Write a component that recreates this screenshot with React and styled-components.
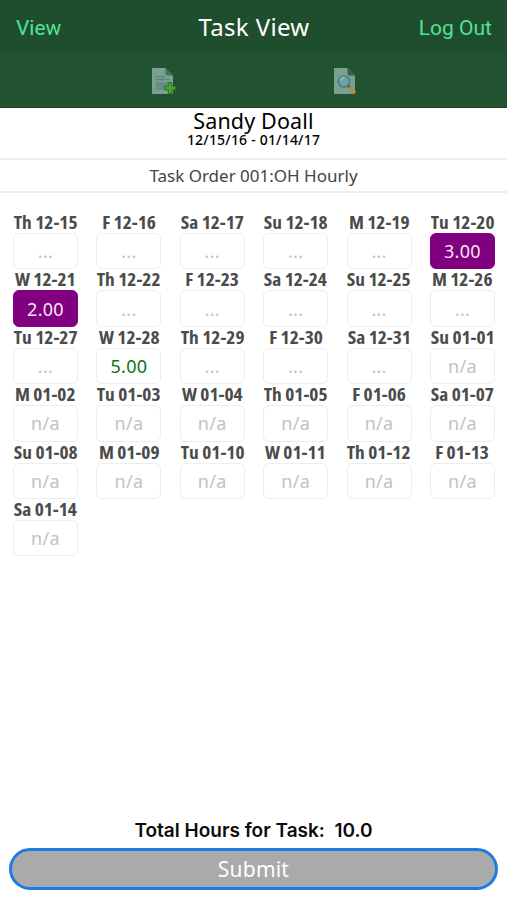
import React from 'react'
import styled, { createGlobalStyle } from 'styled-components';

const days = [
    ['Th 12-15'], ['F 12-16'], ['Sa 12-17'], ['Su 12-18'], ['M 12-19'], ['Tu 12-20', '3.00', 'saved'],
    ['W 12-21', '2.00', 'saved'], ['Th 12-22'], ['F 12-23'], ['Sa 12-24'], ['Su 12-25'], ['M 12-26'],
    ['Tu 12-27'], ['W 12-28', '5.00', 'edited'], ['Th 12-29'], ['F 12-30'], ['Sa 12-31'], ['Su 01-01', 'n/a'],
    ['M 01-02', 'n/a'], ['Tu 01-03', 'n/a'], ['W 01-04', 'n/a'], ['Th 01-05', 'n/a'], ['F 01-06', 'n/a'], ['Sa 01-07', 'n/a'],
    ['Su 01-08', 'n/a'], ['M 01-09', 'n/a'], ['Tu 01-10', 'n/a'], ['W 01-11', 'n/a'], ['Th 01-12', 'n/a'], ['F 01-13', 'n/a'],
    ['Sa 01-14', 'n/a'],
];

function AddPageIcon() {
    return (
        <svg width="26" height="28" viewBox="0 0 26 28">
            <path d="M1 1h13.500l7.500 7.500V27H1z" fill="#7b9f91" />
            <path d="M14.500 1l7.500 7.500h-5q-2.500 0-2.500-2.500z" fill="#416f5b" />
            <path d="M4.500 9.500h9.500M4.500 12.500h14" stroke="#5f877b" strokeWidth="1.300" />
            <path d="M4.500 15h14v8h-14z" fill="#668d87" />
            <path d="M17.300 15.500h3.600v3.700h3.700v3.600h-3.700v3.700h-3.600v-3.700h-3.700v-3.600h3.700z" fill="#49a536" stroke="#25751f" />
        </svg>
    )
}

function FindPageIcon() {
    return (
        <svg width="26" height="28" viewBox="0 0 26 28">
            <path d="M1 1h13.500l7.500 7.500V27H1z" fill="#7b9f91" />
            <path d="M14.500 1l7.500 7.500h-5q-2.500 0-2.500-2.500z" fill="#34604f" />
            <path d="M14.500 18l3 3" stroke="#4f7470" strokeWidth="2.500" />
            <path d="M16.500 20.500l5.500 5.500" stroke="#b58b3c" strokeWidth="3.800" />
            <circle cx="11" cy="14.500" r="5.600" fill="#68a5aa" stroke="#4b777a" strokeWidth="1.400" />
            <path d="M7.500 13.500a4 4 0 0 1 4-3" fill="none" stroke="#8dbcbb" strokeWidth="1.500" />
        </svg>
    )
}

function App() {
    return (
        <Screen>
            <GlobalStyle />
            <NavBar>
                <NavLink>View</NavLink>
                <Title>Task View</Title>
                <NavLink $end>Log Out</NavLink>
            </NavBar>
            <Toolbar>
                <ToolButton aria-label="Add"><AddPageIcon /></ToolButton>
                <ToolButton aria-label="Find"><FindPageIcon /></ToolButton>
            </Toolbar>
            <Person>
                <h2>Sandy Doall</h2>
                <p>12/15/16 - 01/14/17</p>
            </Person>
            <TaskName><span>Task Order 001:OH Hourly</span></TaskName>
            <Days>
                {days.map(([label, hours, status]) => (
                    <Day key={label}>
                        <DayLabel>{label}</DayLabel>
                        <Hours $status={status}>{hours || '...'}</Hours>
                    </Day>
                ))}
            </Days>
            <Footer>
                <Total>Total Hours for Task:&nbsp; 10.0</Total>
                <Submit>Submit</Submit>
            </Footer>
        </Screen>
    )
}

const GlobalStyle = createGlobalStyle`
  * {
    margin: 0;
    padding: 0;
    box-sizing: border-box;
  }
  body {
    background: #ffffff;
    font-family: "Noto Sans", sans-serif;
  }
`;

const Screen = styled.div`
  display: flex;
  flex-direction: column;
  height: 900px;
  overflow: hidden;
`;

const NavBar = styled.header`
  display: grid;
  grid-template-columns: 1fr auto 1fr;
  align-items: center;
  height: 54px;
  padding: 0 15px 0 16px;
  background: #1e4e2d;
  border-bottom: 1px solid #275635;
`;

const NavLink = styled.button`
  border: none;
  background: none;
  color: #52e297;
  font-family: Roboto, sans-serif;
  font-size: 21px;
  line-height: 24px;
  padding-top: 3px;
  text-align: ${({ $end }) => ($end ? 'right' : 'left')};
`;

const Title = styled.h1`
  color: #ffffff;
  font-size: 24px;
  font-weight: 400;
  line-height: 30px;
  letter-spacing: 0.35px;
`;

const Toolbar = styled.div`
  display: flex;
  justify-content: center;
  align-items: center;
  gap: 156px;
  height: 54px;
  padding: 1px 0 0 2px;
  background: #215331;
  border-bottom: 1px solid #1b4529;
`;

const ToolButton = styled.button`
  display: flex;
  border: none;
  background: none;
`;

const Person = styled.section`
  height: 52px;
  border-bottom: 2px solid #ececec;
  text-align: center;
  color: #000000;
  h2 {
    font-size: 21.5px;
    font-weight: 400;
    line-height: 25px;
    letter-spacing: 0.15px;
  }
  p {
    font-size: 14px;
    font-weight: 500;
    line-height: 14px;
    letter-spacing: 0.2px;
  }
`;

const TaskName = styled.div`
  display: flex;
  justify-content: center;
  align-items: center;
  height: 33px;
  border-bottom: 2px solid #ececec;
  color: #444444;
  font-size: 17px;
`;

const Days = styled.div`
  display: grid;
  grid-template-columns: repeat(6, 65px);
  justify-content: space-between;
  padding: 19px 12px 0 13px;
`;

const Day = styled.div`
  display: flex;
  flex-direction: column;
  align-items: center;
  height: 57.4px;
`;

const DayLabel = styled.span`
  color: #4b4b4b;
  font-family: "Open Sans", sans-serif;
  font-size: 18px;
  font-weight: 700;
  font-stretch: 75%;
  line-height: 21px;
  white-space: nowrap;
  transform: scaleX(1.075);
`;

const Hours = styled.div`
  display: flex;
  justify-content: center;
  align-items: center;
  width: 65px;
  height: 36.4px;
  border: 1px solid ${({ $status }) => ($status === 'saved' ? '#800080' : '#ededed')};
  border-radius: 6px;
  background: ${({ $status }) => ($status === 'saved' ? '#800080' : '#ffffff')};
  color: ${({ $status }) => ({ saved: '#f7e6f7', edited: '#0d750d' }[$status] || '#c2c2c2')};
  font-size: 18px;
  letter-spacing: 0.3px;
`;

const Footer = styled.footer`
  display: flex;
  flex-direction: column;
  align-items: center;
  margin-top: auto;
  padding: 0 9px 10px;
`;

const Total = styled.p`
  color: #0c0c0c;
  font-family: Inter, sans-serif;
  font-size: 19px;
  font-weight: 600;
  line-height: 24px;
  margin-bottom: 5px;
`;

const Submit = styled.button`
  width: 100%;
  height: 42px;
  border: 3px solid #1b7de4;
  border-radius: 21px;
  background: #aaaaaa;
  color: #ffffff;
  font-family: "Noto Sans", sans-serif;
  font-size: 21px;
  letter-spacing: 0.2px;
`;

export default App
